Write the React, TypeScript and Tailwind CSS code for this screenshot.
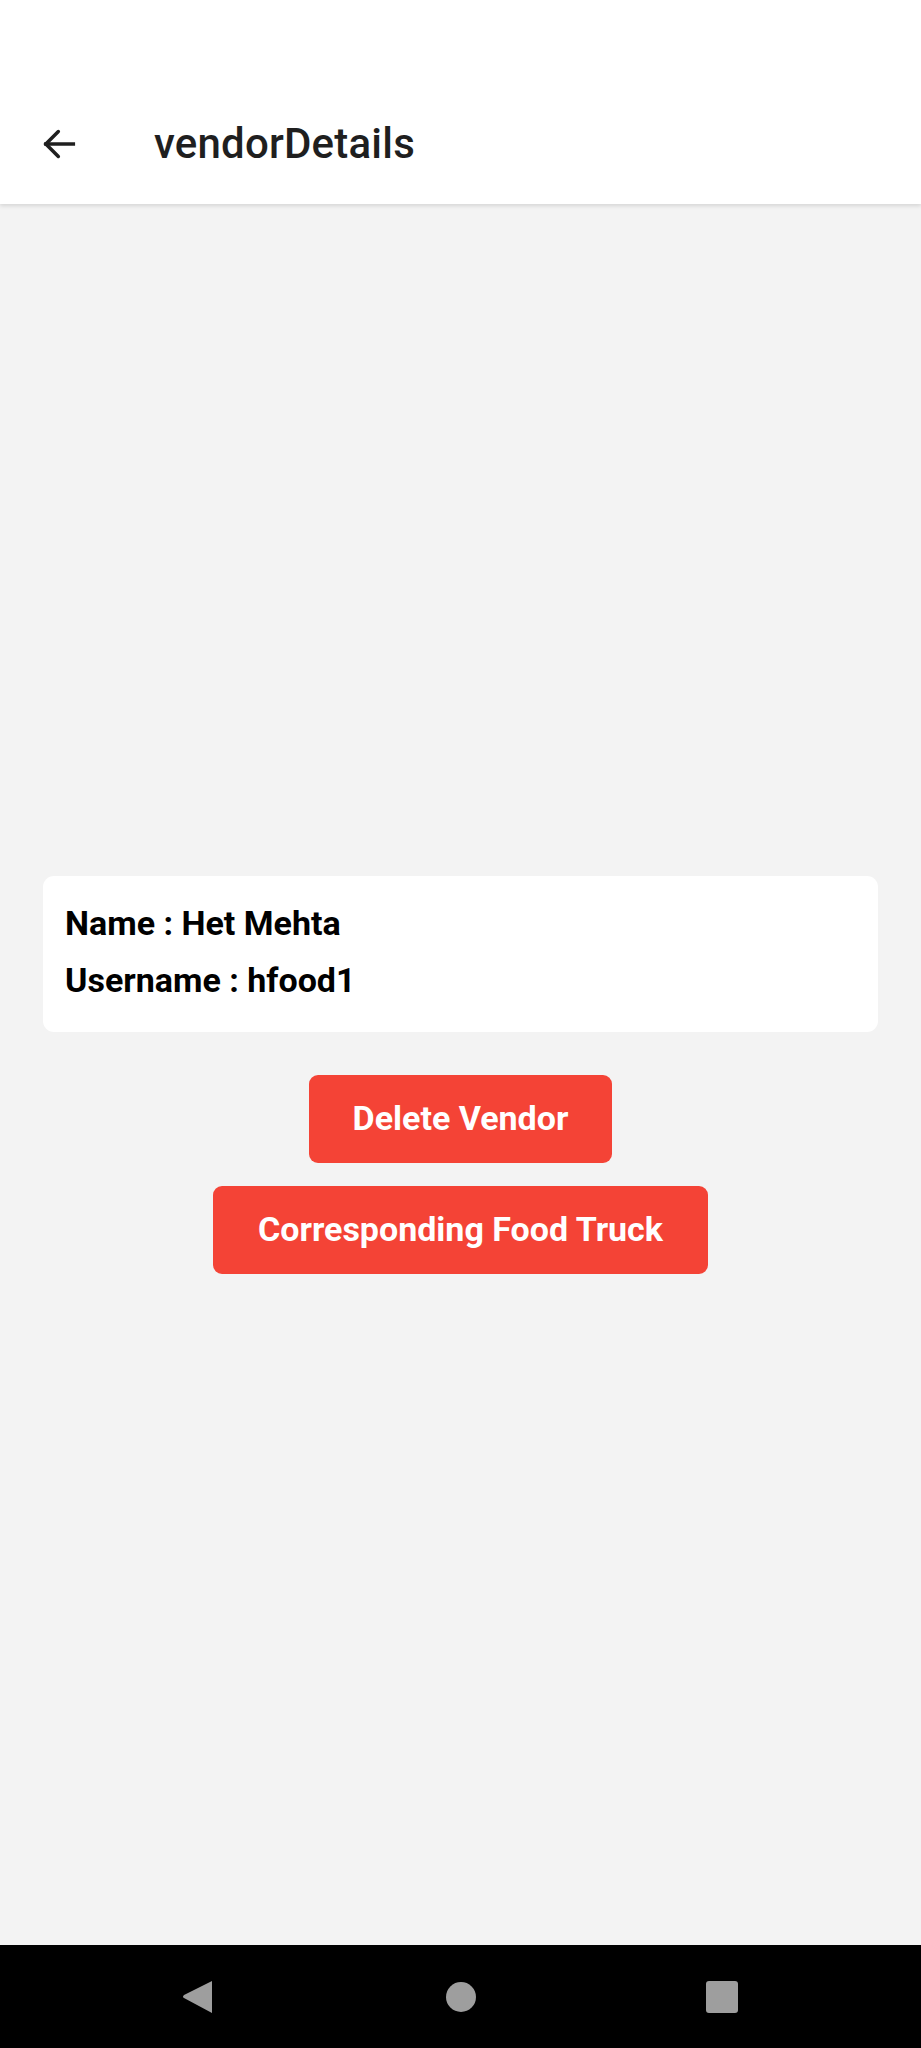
import React from "react";

export default function App() {
  return (
    <div className="w-[921px] h-[2048px] flex flex-col bg-[#f3f3f3] overflow-hidden" style={{ fontFamily: "Roboto, 'Noto Sans', sans-serif" }}>
      <header className="h-[204px] shrink-0 bg-white flex items-end pb-[30px] shadow-[0_2px_4px_rgba(0,0,0,0.12)] relative z-10">
        <div className="flex items-center h-[60px]">
          <div className="w-[120px] flex items-center justify-start pl-[40px]">
            <svg width="40" height="40" viewBox="0 0 24 24" fill="none" stroke="#1f1f1f" strokeWidth="2.1" strokeLinecap="square">
              <path d="M3.5 12H20" />
              <path d="M11 4.5L3.5 12L11 19.5" strokeLinecap="round" strokeLinejoin="miter" />
            </svg>
          </div>
          <div className="pl-[34px] text-[42px] font-medium text-[#1f1f1f] leading-none tracking-[0.2px]">vendorDetails</div>
        </div>
      </header>
      <main className="flex-1 flex flex-col justify-center items-center">
        <div className="w-[835px] bg-white rounded-[11px] px-[22px] pt-[30px] pb-[35px] flex flex-col gap-[23px]">
          <div className="text-[34px] font-bold text-black leading-[34px]">Name : Het Mehta</div>
          <div className="text-[34px] font-bold text-black leading-[34px]">Username : hfood1</div>
        </div>
        <button className="mt-[43px] h-[88px] px-[44px] rounded-[9px] bg-[#f44336] text-white text-[34px] font-bold">Delete Vendor</button>
        <button className="mt-[23px] h-[88px] px-[45px] rounded-[9px] bg-[#f44336] text-white text-[34px] font-bold">Corresponding Food Truck</button>
      </main>
      <nav className="h-[103px] shrink-0 bg-black flex items-center">
        <div className="w-full flex items-center justify-center gap-0">
          <div className="w-[921px] flex items-center">
            <div className="ml-[182px]">
              <svg width="32" height="34" viewBox="0 0 32 34">
                <path d="M30 1 L30 33 L2 18 Q0 17 2 15 Z" fill="#9e9e9e" strokeLinejoin="round" />
              </svg>
            </div>
            <div className="ml-[232px] w-[30px] h-[30px] rounded-full bg-[#9e9e9e]" />
            <div className="ml-[230px] w-[32px] h-[32px] rounded-[3px] bg-[#9e9e9e]" />
          </div>
        </div>
      </nav>
    </div>
  );
}
